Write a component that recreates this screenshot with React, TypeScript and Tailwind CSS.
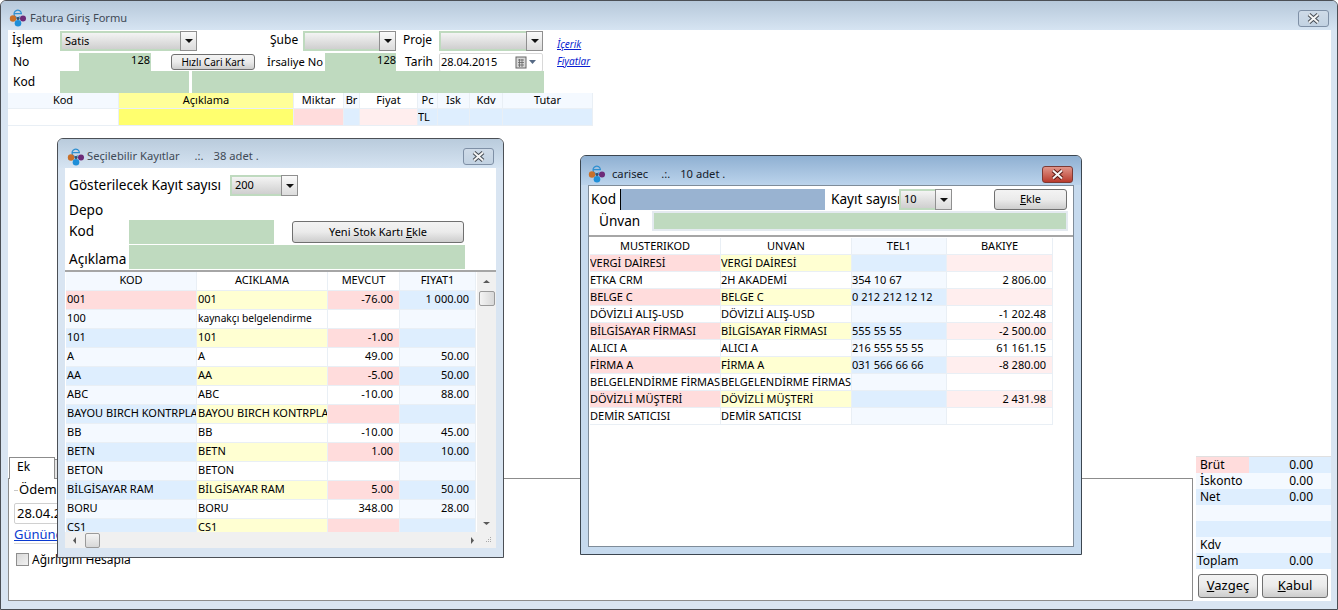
import React from "react";

const F = "font-['Noto_Sans','Liberation_Sans',sans-serif]";

function Logo() {
  return (
    <svg width="18" height="18" viewBox="0 0 18 18" className="shrink-0">
      <path d="M5 4.6 H12.4 A3.7 3.7 0 1 0 11.2 7.6" fill="none" stroke="#2f8fd0" strokeWidth="1.2" />
      <circle cx="9" cy="9.5" r="1.6" fill="#33506e" />
      <circle cx="4" cy="9.5" r="3.2" fill="#c8702a" />
      <circle cx="14" cy="9.5" r="3" fill="#6d2a78" />
      <circle cx="9" cy="14.2" r="3.3" fill="#1f8fd8" />
    </svg>
  );
}

function CloseBtn({ red }: { red?: boolean }) {
  return (
    <div
      className={
        red
          ? "w-[31px] h-[17px] rounded-[3px] border border-[#7d3a34] bg-gradient-to-b from-[#e0958a] to-[#b8392c] flex items-center justify-center"
          : "w-[31px] h-[17px] rounded-[3px] border border-[#7f90a6] bg-gradient-to-b from-[#cfdbe8] to-[#c2d2e2] flex items-center justify-center"
      }
    >
      <svg width="15" height="11" viewBox="0 0 15 11">
        <path d="M3 1.5 L12 9.5 M12 1.5 L3 9.5" stroke={red ? "#5c1a14" : "#474d55"} strokeWidth="4" />
        <path d="M3 1.5 L12 9.5 M12 1.5 L3 9.5" stroke="#f4f4f4" strokeWidth="2" />
      </svg>
    </div>
  );
}

function Combo({ w, h = "h-[20px]", value }: { w: string; h?: string; value?: string }) {
  return (
    <div className={`${w} ${h} shrink-0 flex border-l-2 border-t-2 border-b-2 border-[#bfdabf] bg-gradient-to-b from-[#f4f4f4] to-[#cfcfcf]`}>
      <div className="flex-1 pl-[3px] text-[11px] leading-[16px] text-black overflow-hidden whitespace-nowrap">{value}</div>
      <div className="w-[17px] -my-[2px] border border-[#8f8f8f] bg-gradient-to-b from-[#fafafa] to-[#dcdcdc] flex items-center justify-center shrink-0">
        <svg width="8" height="4" viewBox="0 0 8 4"><path d="M0 0 H8 L4 4 Z" fill="#111" /></svg>
      </div>
    </div>
  );
}

function Btn({ w, h, children, size = "text-[11px]" }: { w: string; h: string; children: React.ReactNode; size?: string }) {
  return (
    <div className={`${w} ${h} ${size} shrink-0 rounded-[3px] border border-[#707070] bg-gradient-to-b from-[#f3f3f3] via-[#ebebeb] to-[#cdcdcd] flex items-center justify-center text-black whitespace-nowrap`}>
      <span>{children}</span>
    </div>
  );
}

const HEAD = "bg-[#f4f9ff]";
const WHITE = "bg-white";
const PALE = "bg-[#f4f9ff]";
const BLUE = "bg-[#deeefe]";
const PINK = "bg-[#ffdcdc]";
const LPINK = "bg-[#ffeeee]";
const YEL = "bg-[#ffffd2]";

function Cell({ w, h, bg, right, center, flush, up, children }: { w: string; h: string; bg: string; right?: boolean; center?: boolean; flush?: boolean; up?: boolean; children?: React.ReactNode }) {
  return (
    <div
      className={`${w} ${h} ${bg} ${up ? "pb-[1px]" : ""} shrink-0 border-r border-b border-[#e9eff5] overflow-hidden whitespace-nowrap flex items-center text-[11px] text-black ${
        right ? "justify-end pr-[6px]" : center ? "justify-center" : flush ? "" : "pl-[1px]"
      }`}
    >
      {children}
    </div>
  );
}

const stock: [string, string, string, string][] = [
  ["001", "001", "-76.00", "1 000.00"],
  ["100", "kaynakçı belgelendirme", "", ""],
  ["101", "101", "-1.00", ""],
  ["A", "A", "49.00", "50.00"],
  ["AA", "AA", "-5.00", "50.00"],
  ["ABC", "ABC", "-10.00", "88.00"],
  ["BAYOU BIRCH KONTRPLAK", "BAYOU BIRCH KONTRPLAK", "", ""],
  ["BB", "BB", "-10.00", "45.00"],
  ["BETN", "BETN", "1.00", "10.00"],
  ["BETON", "BETON", "", ""],
  ["BİLGİSAYAR RAM", "BİLGİSAYAR RAM", "5.00", "50.00"],
  ["BORU", "BORU", "348.00", "28.00"],
  ["CS1", "CS1", "", ""],
];

const cari: [string, string, string, string][] = [
  ["VERGİ DAİRESİ", "VERGİ DAİRESİ", "", ""],
  ["ETKA CRM", "2H AKADEMİ", "354 10 67", "2 806.00"],
  ["BELGE C", "BELGE C", "0 212 212 12 12", ""],
  ["DÖVİZLİ ALIŞ-USD", "DÖVİZLİ ALIŞ-USD", "", "-1 202.48"],
  ["BİLGİSAYAR FİRMASI", "BİLGİSAYAR FİRMASI", "555 55 55", "-2 500.00"],
  ["ALICI A", "ALICI A", "216 555 55 55", "61 161.15"],
  ["FİRMA A", "FİRMA A", "031 566 66 66", "-8 280.00"],
  ["BELGELENDİRME FİRMASI", "BELGELENDİRME FİRMASI", "", ""],
  ["DÖVİZLİ MÜŞTERİ", "DÖVİZLİ MÜŞTERİ", "", "2 431.98"],
  ["DEMİR SATICISI", "DEMİR SATICISI", "", ""],
];

function Arrow({ d }: { d: "u" | "d" | "l" | "r" }) {
  const p = { u: "M1 6 H8 L4.5 3 Z", d: "M1 3 H8 L4.5 6 Z", l: "M6 1 V8 L3 4.5 Z", r: "M3 1 V8 L6 4.5 Z" }[d];
  return (
    <svg width="9" height="9" viewBox="0 0 9 9" className="shrink-0">
      <path d={p} fill="#5a5a5a" />
    </svg>
  );
}

function StockWindow() {
  return (
    <div className="absolute left-[57px] top-[138px] w-[447px] h-[420px] border border-[#4b4f55] rounded-t-[6px] bg-[#d9e5f2] overflow-hidden flex flex-col">
      <div className="h-[29px] flex items-center shrink-0 pt-[6px] px-[7px] bg-gradient-to-b from-[#b9cbdc] to-[#d6e4f2]">
        <div className="w-[20px] ml-[2px] flex"><Logo /></div>
        <span className="text-[11.2px] text-[#3f4a56]">Seçilebilir Kayıtlar</span>
        <span className="ml-[15px] text-[11.2px] text-[#3f4a56]">.:.</span>
        <span className="ml-[10px] text-[11.2px] text-[#3f4a56]">38 adet .</span>
        <div className="ml-auto mr-[2px]"><CloseBtn /></div>
      </div>
      <div className="flex-1 mx-[7px] mb-[9px] bg-white flex flex-col min-h-0">
        <div className="flex items-center mt-[7px] h-[21px] pl-[4px]">
          <span className="w-[161px] text-[13.6px] whitespace-nowrap text-black">Gösterilecek Kayıt sayısı</span>
          <Combo w="w-[68px]" h="h-[21px]" value="200" />
        </div>
        <div className="h-[20px] mt-[4px] pl-[4px] text-[13.6px] leading-[20px] text-black">Depo</div>
        <div className="h-[24px] flex pl-[4px] text-[13.6px] text-black">
          <span className="w-[60px] leading-[21px]">Kod</span>
          <div className="w-[145px] bg-[#bfdabf]" />
          <div className="ml-[18px] mt-[1px]"><Btn w="w-[172px]" h="h-[22px]">Yeni Stok Kartı <u>E</u>kle</Btn></div>
        </div>
        <div className="h-[24px] mt-[1px] flex pl-[4px] text-[13.6px] text-black">
          <span className="w-[60px] leading-[28px]">Açıklama</span>
          <div className="w-[336px] bg-[#bfdabf]" />
        </div>
        <div className="mt-[1px] h-[2px] bg-[#a6a6a6]" />
        <div className="flex-1 flex min-h-0">
          <div className="w-[412px] pl-[1px] flex flex-col overflow-hidden">
            <div className="flex shrink-0">
              <Cell w="w-[131px]" h="h-[19px]" bg={HEAD} center up>KOD</Cell>
              <Cell w="w-[131px]" h="h-[19px]" bg={WHITE} center up>ACIKLAMA</Cell>
              <Cell w="w-[72px]" h="h-[19px]" bg={WHITE} center up>MEVCUT</Cell>
              <Cell w="w-[76px]" h="h-[19px]" bg={HEAD} center up>FIYAT1</Cell>
            </div>
            <div className="flex-1 overflow-hidden">
              {stock.map((r, i) => {
                const odd = i % 2 === 0;
                const first = i === 0;
                return (
                  <div className="flex" key={i}>
                    <Cell w="w-[131px]" h="h-[19px]" bg={first ? PINK : odd ? BLUE : PALE} up>{r[0]}</Cell>
                    <Cell w="w-[131px]" h="h-[19px]" bg={odd ? YEL : WHITE} up>
                      {i === 1 ? <span className="text-[10.2px]">{r[1]}</span> : r[1]}
                    </Cell>
                    <Cell w="w-[72px]" h="h-[19px]" bg={odd ? PINK : WHITE} right up>{r[2]}</Cell>
                    <Cell w="w-[76px]" h="h-[19px]" bg={odd ? BLUE : PALE} right up>{r[3]}</Cell>
                  </div>
                );
              })}
            </div>
          </div>
          <div className="flex-1 bg-[#f0f0f0] flex flex-col items-center">
            <div className="h-[19px] flex items-center justify-center"><Arrow d="u" /></div>
            <div className="w-[16px] h-[15px] rounded-[2px] border border-[#9a9a9a] bg-gradient-to-r from-[#f4f4f4] to-[#d8d8d8]" />
            <div className="mt-auto h-[17px] flex items-center justify-center"><Arrow d="d" /></div>
          </div>
        </div>
        <div className="h-[16px] shrink-0 bg-[#f0f0f0] flex items-center">
          <div className="w-[5px]" />
          <Arrow d="l" />
          <div className="ml-[6px] w-[15px] h-[15px] rounded-[2px] border border-[#9a9a9a] bg-gradient-to-b from-[#f4f4f4] to-[#d8d8d8]" />
          <div className="ml-auto mr-[6px]"><Arrow d="r" /></div>
          <svg width="9" height="9" viewBox="0 0 9 9" className="mr-[4px] shrink-0">
            <path d="M7 1 h1 v1 h-1 Z M5 3 h1 v1 h-1 Z M7 3 h1 v1 h-1 Z M3 5 h1 v1 h-1 Z M5 5 h1 v1 h-1 Z M7 5 h1 v1 h-1 Z" fill="#a8a8a8" />
          </svg>
        </div>
      </div>
    </div>
  );
}

function CariWindow() {
  return (
    <div className="absolute left-[580px] top-[155px] w-[502px] h-[400px] border border-[#3c4650] rounded-t-[6px] bg-[#c6daee] overflow-hidden flex flex-col">
      <div className="h-[29px] flex items-center shrink-0 pt-[7px] px-[7px] bg-gradient-to-b from-[#8fb0d2] to-[#bcd4ec]">
        <div className="w-[20px] flex"><Logo /></div>
        <span className="ml-[4px] text-[11.2px] text-[#15202b]">carisec</span>
        <span className="ml-[13px] text-[11.2px] text-[#15202b]">.:.</span>
        <span className="ml-[10px] text-[11.2px] text-[#15202b]">10 adet .</span>
        <div className="ml-auto mr-[1px]"><CloseBtn red /></div>
      </div>
      <div className="flex-1 mx-[7px] mb-[7px] bg-white border border-[#7f8c99] flex flex-col min-h-0">
        <div className="h-[51px] shrink-0 border-b-2 border-[#a6a6a6] text-black">
          <div className="flex h-[24px] pt-[3px]">
            <span className="w-[31px] pl-[2px] text-[13.6px] leading-[20px]">Kod</span>
            <div className="w-[205px] h-[21px] bg-[#99b3d1] border-l border-black" />
            <span className="ml-[6px] w-[68px] text-[13.6px] leading-[20px] whitespace-nowrap overflow-hidden">Kayıt sayısı</span>
            <Combo w="w-[53px]" h="h-[21px]" value="10" />
            <div className="ml-[42px]"><Btn w="w-[73px]" h="h-[21px]"><u>E</u>kle</Btn></div>
          </div>
          <div className="flex h-[22px] pt-[1px]">
            <span className="w-[63px] pl-[10px] text-[13.6px] leading-[20px]">Ünvan</span>
            <div className="w-[416px] h-[20px] bg-[#bfdabf] border-2 border-[#e4eaf0]" />
          </div>
        </div>
        <div className="pl-[1px] pt-[1px]">
          <div className="flex">
            <Cell w="w-[131px]" h="h-[17px]" bg={WHITE} center>MUSTERIKOD</Cell>
            <Cell w="w-[131px]" h="h-[17px]" bg={WHITE} center>UNVAN</Cell>
            <Cell w="w-[95px]" h="h-[17px]" bg={HEAD} center>TEL1</Cell>
            <Cell w="w-[106px]" h="h-[17px]" bg={WHITE} center>BAKIYE</Cell>
          </div>
          {cari.map((r, i) => {
            const odd = i % 2 === 0;
            return (
              <div className="flex" key={i}>
                <Cell w="w-[131px]" h="h-[17px]" bg={odd ? PINK : WHITE} flush>{r[0]}</Cell>
                <Cell w="w-[131px]" h="h-[17px]" bg={odd ? YEL : WHITE} flush>{r[1]}</Cell>
                <Cell w="w-[95px]" h="h-[17px]" bg={odd ? BLUE : PALE} flush>{r[2]}</Cell>
                <Cell w="w-[106px]" h="h-[17px]" bg={odd ? LPINK : WHITE} right>{r[3]}</Cell>
              </div>
            );
          })}
        </div>
      </div>
    </div>
  );
}

function TopGrid() {
  const H = "h-[16px]";
  const D = "h-[17px]";
  return (
    <div className="w-[585px]">
      <div className="flex">
        <Cell w="w-[111px]" h={H} bg={HEAD} center>Kod</Cell>
        <Cell w="w-[175px]" h={H} bg="bg-[#ffff99]" center>Açıklama</Cell>
        <Cell w="w-[50px]" h={H} bg={WHITE} center>Miktar</Cell>
        <Cell w="w-[16px]" h={H} bg={HEAD} center>Br</Cell>
        <Cell w="w-[58px]" h={H} bg={WHITE} center>Fiyat</Cell>
        <Cell w="w-[20px]" h={H} bg={HEAD} center>Pc</Cell>
        <Cell w="w-[32px]" h={H} bg={HEAD} center>Isk</Cell>
        <Cell w="w-[33px]" h={H} bg={HEAD} center>Kdv</Cell>
        <Cell w="w-[90px]" h={H} bg={HEAD} center>Tutar</Cell>
      </div>
      <div className="flex">
        <Cell w="w-[111px]" h={D} bg={WHITE} />
        <Cell w="w-[175px]" h={D} bg="bg-[#ffff6e]" />
        <Cell w="w-[50px]" h={D} bg={PINK} />
        <Cell w="w-[16px]" h={D} bg={BLUE} />
        <Cell w="w-[58px]" h={D} bg={LPINK} />
        <Cell w="w-[20px]" h={D} bg={BLUE} flush>TL</Cell>
        <Cell w="w-[32px]" h={D} bg={BLUE} />
        <Cell w="w-[33px]" h={D} bg={BLUE} />
        <Cell w="w-[90px]" h={D} bg={BLUE} />
      </div>
    </div>
  );
}

function Totals() {
  const rows: [string, string, string][] = [
    ["Brüt", "0.00", BLUE],
    ["İskonto", "0.00", PALE],
    ["Net", "0.00", BLUE],
    ["", "", PALE],
    ["", "", BLUE],
    ["Kdv", "", PALE],
    ["Toplam", "0.00", BLUE],
  ];
  return (
    <div className="w-[135px] ml-[3px] shrink-0 flex flex-col text-[12px] text-black">
      <div className="h-[1px] bg-[#e0e0e0]" />
      {rows.map((r, i) => (
        <div key={i} className={`h-[16px] flex items-center ${r[2]}`}>
          <div className={i === 0 ? "w-[53px] h-full bg-[#ffdcdc] pl-[4px] leading-[16px]" : i === 6 ? "w-[53px] pl-[1px]" : "w-[53px] pl-[4px]"}>{r[0]}</div>
          <div className="ml-auto pr-[18px]">{r[1]}</div>
        </div>
      ))}
      <div className="flex pl-[2px] mt-[5px] gap-[4px]">
        <Btn w="w-[60px]" h="h-[24px]" size="text-[13px]"><u>V</u>azgeç</Btn>
        <Btn w="w-[66px]" h="h-[24px]" size="text-[13px]"><u>K</u>abul</Btn>
      </div>
    </div>
  );
}

function TabPanel() {
  return (
    <div className="w-[1185px] shrink-0 flex flex-col text-black text-[12px]">
      <div className="h-[22px] flex items-end">
        <div className="w-[46px] h-[22px] -mb-[1px] z-10 ml-[1px] border border-b-0 border-[#8c8c8c] bg-white pl-[7px] leading-[18px]">Ek</div>
        <div className="w-[10px] h-[19px] border-r border-t border-[#8c8c8c] bg-[#e4e4e4]" />
      </div>
      <div className="flex-1 border border-[#8c8c8c] px-[5px]">
        <div className="flex items-center h-[22px]">
          <div className="w-[4px] h-[1px] bg-[#c8c8c8]" />
          <span className="ml-[1px] text-[13px]">Ödeme</span>
        </div>
        <div className="w-[140px] h-[21px] mt-[2px] border border-[#d0d0d0] rounded-[2px] pl-[2px] text-[13px] leading-[19px]">28.04.2015</div>
        <div className="mt-[1px] h-[18px] text-[13px] leading-[18px] text-[#0a3ad0] underline">Günündür</div>
        <div className="w-[120px] h-[1px] bg-[#d8d8d8]" />
        <div className="flex items-center mt-[9px] ml-[2px] h-[13px]">
          <div className="w-[13px] h-[13px] border border-[#8e8e8e] bg-gradient-to-br from-[#d8d8d8] to-[#f2f2f2]" />
          <span className="ml-[3px]">Ağırlığını Hesapla</span>
        </div>
      </div>
    </div>
  );
}

export default function App() {
  return (
    <div className={`${F} relative w-[1338px] h-[610px] overflow-hidden bg-white`}>
      <div className="w-[1338px] h-[610px] border border-[#4b4f55] rounded-t-[6px] bg-[#d9e5f2] overflow-hidden flex flex-col">
        <div className="h-[29px] shrink-0 flex items-center pt-[5px] pl-[8px] pr-[7px] bg-gradient-to-b from-[#b6c8da] to-[#d6e4f2]">
          <div className="w-[21px] flex"><Logo /></div>
          <span className="text-[11.1px] text-[#3f4a56]">Fatura Giriş Formu</span>
          <div className="ml-auto mr-[1px]"><CloseBtn /></div>
        </div>
        <div className="flex-1 ml-[7px] mr-[6px] mb-[8px] bg-white flex flex-col min-h-0 text-black">
          <div className="flex">
            <div className="w-[536px] shrink-0 text-[12px]">
              <div className="flex items-start h-[23px] pt-[1px]">
                <span className="w-[52px] pl-[4px] leading-[17px]">İşlem</span>
                <Combo w="w-[137px]" value="Satis" />
                <span className="ml-[73px] w-[33px] leading-[17px]">Şube</span>
                <Combo w="w-[93px]" />
                <span className="ml-[7px] w-[36px] leading-[17px]">Proje</span>
                <Combo w="w-[104px]" />
              </div>
              <div className="flex items-start h-[18px]">
                <span className="w-[71px] pl-[5px] leading-[18px]">No</span>
                <div className="w-[72px] h-[18px] bg-[#bfdabf] text-right pr-[1px] text-[11px] leading-[14px]">128</div>
                <div className="ml-[20px] mt-[1px]"><Btn w="w-[84px]" h="h-[16px]" size="text-[10px]">Hızlı Cari Kart</Btn></div>
                <span className="ml-[12px] w-[58px] whitespace-nowrap leading-[18px] text-[11.2px]">İrsaliye No</span>
                <div className="w-[71px] h-[18px] bg-[#bfdabf] text-right text-[11px] leading-[14px]">128</div>
                <span className="ml-[9px] w-[34px] leading-[18px]">Tarih</span>
                <div className="w-[104px] h-[19px] border border-[#d8d8d8] rounded-[2px] flex items-center pl-[1px] text-[11px]">
                  <span>28.04.2015</span>
                  <svg width="25" height="13" viewBox="0 0 25 13" className="ml-auto mr-[2px]">
                    <rect x="1" y="1" width="10" height="11" fill="#d8d8d8" stroke="#666" />
                    <path d="M3 4 H9 M3 6.5 H9 M3 9 H9 M4.5 3 V11 M7 3 V11" stroke="#666" strokeWidth="0.8" />
                    <path d="M14 4 H21 L17.5 8 Z" fill="#566a85" />
                  </svg>
                </div>
              </div>
            </div>
            <div className="ml-[13px] pt-[8px] flex flex-col gap-[5px] text-[10px] italic text-[#0a1ed0] underline leading-[12px]">
              <span>İçerik</span>
              <span>Fiyatlar</span>
            </div>
          </div>
          <div className="flex h-[22px] text-[12px] shrink-0">
            <span className="w-[52px] pl-[5px] leading-[22px]">Kod</span>
            <div className="w-[129px] bg-[#bfdabf]" />
            <div className="ml-[3px] w-[352px] bg-[#bfdabf]" />
          </div>
          <TopGrid />
          <div className="flex-1" />
          <div className="h-[145px] flex shrink-0">
            <TabPanel />
            <Totals />
          </div>
        </div>
      </div>
      <StockWindow />
      <CariWindow />
    </div>
  );
}
